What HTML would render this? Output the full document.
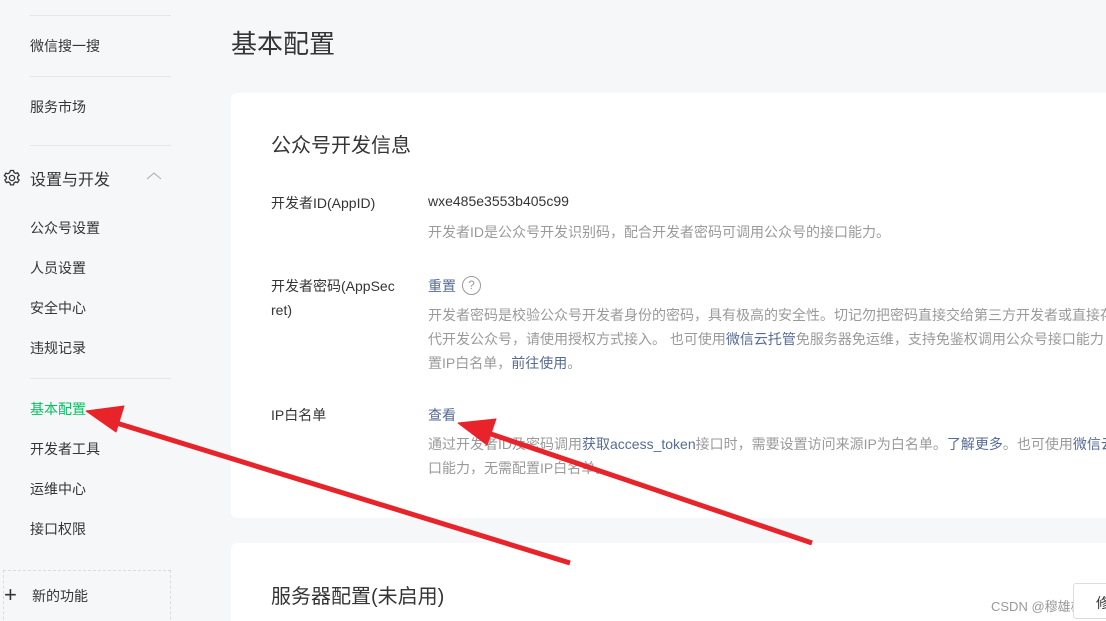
<!DOCTYPE html>
<html style="overflow:hidden;width:1106px;height:621px"><head><meta charset="utf-8"><style>
*{margin:0;padding:0;box-sizing:border-box}
body{width:1106px;height:621px;overflow:hidden;background:#f6f7f9;font-family:"Liberation Sans","Noto Sans CJK SC",sans-serif;position:relative;color:#353535}
.a{position:absolute;white-space:nowrap}
.line{position:absolute;left:30px;width:141px;height:1px;background:#e4e6e9}
.nav{font-size:14px;color:#353535}
.card{position:absolute;background:#fff;border-radius:6px}
.lab{font-size:14px;color:#353535}
.tip{font-size:14px;color:#9a9a9a;line-height:24px}
.lk{color:#576b95}
</style></head><body>
<div class="line" style="top:15px"></div>
<div class="a nav" style="left:30px;top:36px">微信搜一搜</div>
<div class="line" style="top:76px"></div>
<div class="a nav" style="left:30px;top:97px">服务市场</div>
<div class="line" style="top:145px"></div>
<svg class="a" style="left:3px;top:169px" width="18" height="18" viewBox="0 0 18 18" fill="none" stroke="#353535" stroke-width="1.3"><path d="M7.5 1.5h3l.5 2 1.6.9 2-.6 1.5 2.6-1.5 1.4v1.8l1.5 1.4-1.5 2.6-2-.6-1.6.9-.5 2h-3l-.5-2-1.6-.9-2 .6-1.5-2.6 1.5-1.4V8.1L1.4 6.7l1.5-2.6 2 .6 1.6-.9z"/><circle cx="9" cy="9" r="2.6"/></svg>
<div class="a" style="left:30px;top:166px;font-size:16px">设置与开发</div>
<svg class="a" style="left:146px;top:171px" width="16" height="10"><path d="M1 8l7-6 7 6" fill="none" stroke="#aaa" stroke-width="1"/></svg>
<div class="a nav" style="left:30px;top:218px">公众号设置</div>
<div class="a nav" style="left:30px;top:258px">人员设置</div>
<div class="a nav" style="left:30px;top:298px">安全中心</div>
<div class="a nav" style="left:30px;top:338px">违规记录</div>
<div class="line" style="top:378px"></div>
<div class="a nav" style="left:30px;top:399px;color:#07c160">基本配置</div>
<div class="a nav" style="left:30px;top:439px">开发者工具</div>
<div class="a nav" style="left:30px;top:479px">运维中心</div>
<div class="a nav" style="left:30px;top:519px">接口权限</div>
<div class="a" style="left:3px;top:570px;width:168px;height:60px;border:1px dashed #dcdcdc"></div>
<div class="a" style="left:4px;top:582px;font-size:22px;line-height:26px;color:#353535">+</div>
<div class="a nav" style="left:32px;top:586px">新的功能</div>

<div class="a" style="left:231px;top:24px;font-size:26px;color:#353535">基本配置</div>
<div class="card" style="left:231px;top:93px;width:900px;height:425px"></div>
<div class="a" style="left:271px;top:129px;font-size:20px">公众号开发信息</div>
<div class="a lab" style="left:271px;top:193px">开发者ID(AppID)</div>
<div class="a" style="left:428px;top:193px;font-size:14px">wxe485e3553b405c99</div>
<div class="a tip" style="left:428px;top:220px">开发者ID是公众号开发识别码，配合开发者密码可调用公众号的接口能力。</div>
<div class="a lab" style="left:271px;top:274px;line-height:24px">开发者密码(AppSec<br>ret)</div>
<div class="a lab lk" style="left:428px;top:276px">重置</div>
<div class="a" style="left:462px;top:276px;width:19px;height:19px;border:1px solid #9a9a9a;border-radius:50%;font-size:12px;color:#9a9a9a;text-align:center;line-height:17px">?</div>
<div class="a tip" style="left:428px;top:303px">开发者密码是校验公众号开发者身份的密码，具有极高的安全性。切记勿把密码直接交给第三方开发者或直接存<br>代开发公众号，请使用授权方式接入。 也可使用<span class="lk">微信云托管</span>免服务器免运维，支持免鉴权调用公众号接口能力，<br>置IP白名单，<span class="lk">前往使用</span>。</div>
<div class="a lab" style="left:271px;top:405px">IP白名单</div>
<div class="a lab lk" style="left:428px;top:405px">查看</div>
<div class="a tip" style="left:428px;top:432px">通过开发者ID及密码调用<span class="lk">获取access_token</span>接口时，需要设置访问来源IP为白名单。<span class="lk">了解更多</span>。也可使用<span class="lk">微信云</span><br>口能力，无需配置IP白名单。</div>
<div class="card" style="left:231px;top:543px;width:900px;height:100px"></div>
<div class="a" style="left:271px;top:580px;font-size:20px">服务器配置(未启用)</div>
<div class="a" style="left:991px;top:596px;font-size:13px;color:#999">CSDN @穆雄雄</div>
<div class="a" style="left:1073px;top:583px;width:40px;height:36px;background:#fff;border:1px solid #ddd;border-radius:3px;font-size:14px;padding:9px 0 0 22px;color:#333">修</div>

<svg class="a" style="left:0;top:0" width="1106" height="621">
<g fill="#e8232a" stroke="#e8232a" stroke-linejoin="round">
<line x1="570" y1="563" x2="110" y2="421" stroke-width="5"/>
<polygon points="86,411 124,406 116,432"/>
<line x1="812" y1="543" x2="485" y2="432" stroke-width="5"/>
<polygon points="458,423 496,419 487,445"/>
</g></svg>
</body></html>
